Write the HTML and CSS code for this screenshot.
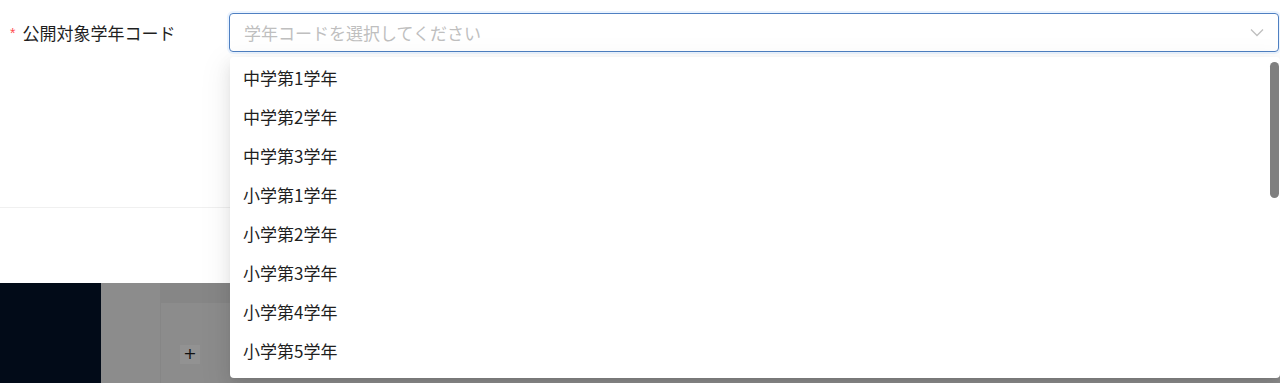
FILE: index.html
```html
<!DOCTYPE html>
<html lang="ja">
<head>
<meta charset="utf-8">
<link rel="stylesheet" href="styles.css">
</head>
<body>
<div class="page">
  <section class="panel">
    <div class="panel-body">
      <div class="form-row">
        <label class="form-label"><span class="req">*</span>公開対象学年コード</label>
        <div class="select">
          <span class="placeholder">学年コードを選択してください</span>
          <svg class="chevron" width="14" height="9" viewBox="0 0 14 9"><path d="M1 1.5 L7 7.5 L13 1.5" fill="none" stroke="#bfbfbf" stroke-width="1.3"/></svg>
        </div>
      </div>
    </div>
    <div class="panel-footer"></div>
  </section>
  <section class="app">
    <aside class="sider"></aside>
    <div class="gutter"></div>
    <div class="content">
      <div class="content-head"></div>
      <div class="content-body">
        <span class="add-btn">+</span>
      </div>
    </div>
  </section>

  <div class="dropdown">
    <ul class="options">
      <li>中学第1学年</li>
      <li>中学第2学年</li>
      <li>中学第3学年</li>
      <li>小学第1学年</li>
      <li>小学第2学年</li>
      <li>小学第3学年</li>
      <li>小学第4学年</li>
      <li>小学第5学年</li>
    </ul>
    <div class="scroll-thumb"></div>
  </div>
</div>
</body>
</html>
```

FILE: styles.css
```css
* { box-sizing: border-box; }
html, body { margin: 0; padding: 0; }
body {
  font-family: "Noto Sans CJK JP", "Noto Sans", sans-serif;
  color: #1f1f1f;
  background: #fff;
}
.page {
  position: relative;
  width: 1280px;
  height: 383px;
  overflow: hidden;
}
.panel {
  background: #fff;
  height: 283px;
  display: flex;
  flex-direction: column;
}
.panel-body {
  height: 208px;
  border-bottom: 1px solid #f0f0f0;
  padding-top: 13px;
}
.form-row {
  display: flex;
  align-items: center;
}
.form-label {
  width: 229px;
  padding-left: 10px;
  font-size: 17px;
  line-height: 38px;
  color: #1f1f1f;
  display: flex;
  align-items: center;
}
.req {
  color: #ff4d4f;
  font-size: 14px;
  margin-right: 7px;
  font-family: "Liberation Sans", sans-serif;
}
.select {
  width: 1050px;
  height: 39px;
  border: 1px solid #4f80c2;
  border-radius: 4px;
  box-shadow: 0 0 0 2px rgba(5, 120, 255, 0.08);
  display: flex;
  align-items: center;
  justify-content: space-between;
  padding: 0 14px 0 14px;
}
.placeholder {
  color: #bfbfbf;
  font-size: 17px;
}
.chevron { display: block; }
.panel-footer { flex: 1; }

.app {
  display: flex;
  height: 100px;
}
.sider {
  width: 101px;
  background: #020b18;
}
.gutter {
  width: 60px;
  background: #8c8c8c;
  border-right: 1px solid #868686;
}
.content {
  flex: 1;
  display: flex;
  flex-direction: column;
}
.content-head {
  height: 20px;
  background: #868686;
}
.content-body {
  flex: 1;
  background: #8c8c8c;
  padding: 37px 0 0 19px;
}
.add-btn {
  display: inline-flex;
  align-items: center;
  justify-content: center;
  width: 20px;
  height: 19px;
  background: #929292;
  color: #111;
  font-size: 16px;
  line-height: 1;
  font-family: "DejaVu Sans", sans-serif;
}

.dropdown {
  position: absolute;
  left: 230px;
  top: 57px;
  width: 1050px;
  height: 321px;
  background: #fff;
  border-radius: 4px;
  overflow: hidden;
  box-shadow: 0 3px 6px -4px rgba(0,0,0,.12), 0 6px 16px 0 rgba(0,0,0,.08), 0 9px 28px 8px rgba(0,0,0,.05);
}
.options {
  list-style: none;
  margin: 0;
  padding: 1px 0 0 0;
}
.options li {
  height: 39px;
  line-height: 39px;
  padding-left: 13px;
  font-size: 17px;
  color: #1f1f1f;
}
.scroll-thumb {
  position: absolute;
  right: 1px;
  top: 5px;
  width: 9px;
  height: 136px;
  border-radius: 5px;
  background: #7f7f7f;
}
```
